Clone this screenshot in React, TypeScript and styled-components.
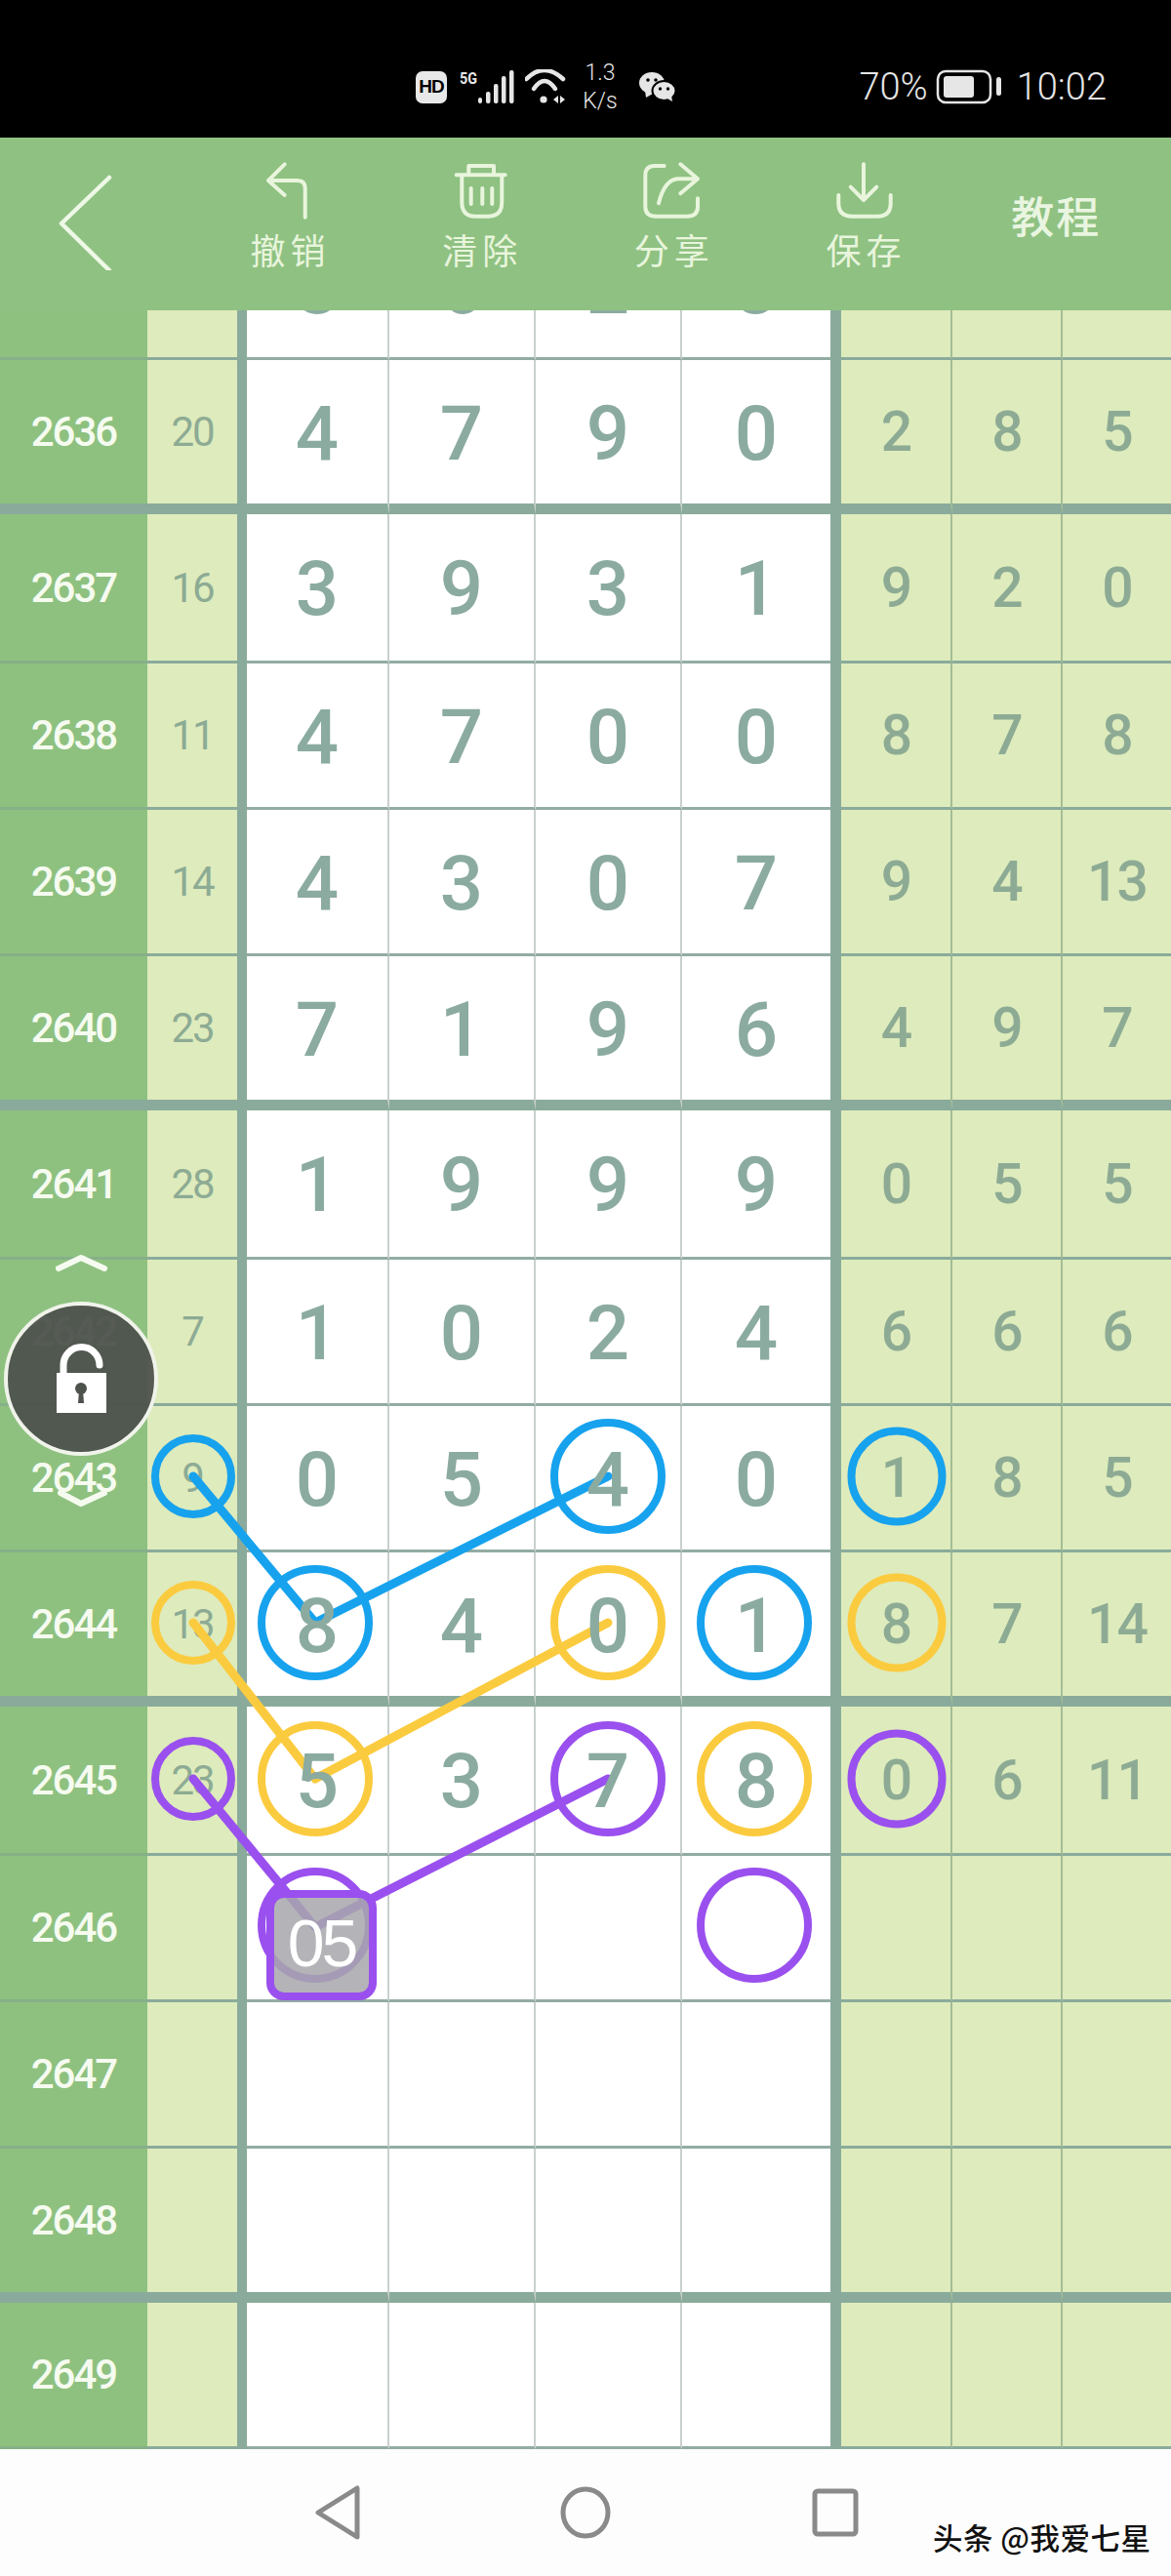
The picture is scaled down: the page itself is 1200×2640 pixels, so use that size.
import React from "react";
import styled, { createGlobalStyle } from "styled-components";

const Global = createGlobalStyle`
  html, body { margin: 0; padding: 0; background: #fff; }
  * { box-sizing: border-box; }
`;

const LINE = "#8aab9b";
const DIGIT = "#8babA0";
const SIDE_DIGIT = "#8dab94";
const NUM_FONT = `Roboto, "Noto Sans", sans-serif`;
const CJK = `"Noto Sans CJK SC", "Noto Sans", sans-serif`;

const Page = styled.div`
  position: relative;
  width: 1200px;
  height: 2640px;
  overflow: hidden;
  background: #fdfdfd;
`;

/* status bar */
const StatusBar = styled.div`
  height: 141px;
  background: #000;
  color: #e6e6e6;
  display: flex;
  align-items: center;
  padding: 37px 66px 0 426px;
  font-family: Roboto, sans-serif;
`;
const HdBadge = styled.div`
  width: 32px;
  height: 33px;
  border-radius: 7px;
  background: #e8e8e8;
  color: #000;
  font: 700 19px "Liberation Sans", sans-serif;
  letter-spacing: -1px;
  display: flex;
  align-items: center;
  justify-content: center;
`;
const StatusIcon = styled.svg<{ $ml: number }>`
  display: block;
  margin-left: ${(p) => p.$ml}px;
  flex: none;
`;
const Speed = styled.div`
  width: 40px;
  margin-left: 15px;
  font-size: 23px;
  font-weight: 300;
  line-height: 29px;
  text-align: center;
`;
const Percent = styled.div`
  margin-left: auto;
  font-size: 38px;
  font-weight: 300;
  line-height: 44px;
`;
const Clock = styled.div`
  margin-left: 15px;
  font-size: 38px;
  font-weight: 300;
  line-height: 44px;
`;

/* toolbar */
const Toolbar = styled.div`
  height: 177px;
  background: #8fc182;
  display: flex;
  color: #e8f5dc;
`;
const BackButton = styled.div`
  width: 196.67px;
  padding-top: 36px;
`;
const Action = styled.div`
  width: 196.67px;
  padding-top: 24px;
  display: flex;
  flex-direction: column;
  align-items: center;
`;
const ActionLabel = styled.div`
  margin-top: 7px;
  font: 400 36px/46px ${CJK};
  letter-spacing: 5px;
  padding-left: 5px;
`;
const Tutorial = styled.div`
  margin: 52px 0 0 53px;
  font: 500 44px/54px ${CJK};
  letter-spacing: 2px;
  color: #e9f5e0;
`;

/* table */
const Viewport = styled.div`
  height: 2192px;
  overflow: hidden;
`;
const Track = styled.div`
  margin-top: -99px;
`;
const Row = styled.div<{ $h: number }>`
  display: grid;
  grid-template-columns: 151px 92px 10px 146px 150px 150px 152px 11px 114px 113px 111px;
  height: ${(p) => p.$h}px;
`;
const Cell = styled.div<{ $line: number }>`
  display: flex;
  align-items: center;
  justify-content: center;
  border-bottom: ${(p) => p.$line}px solid ${LINE};
`;
const LabelCell = styled(Cell)`
  background: #8ec180;
  color: #f6fbf0;
  font: 500 42px ${NUM_FONT};
  letter-spacing: -2px;
  border-bottom-color: ${(p) => (p.$line > 5 ? LINE : "#86b088")};
`;
const SumCell = styled(Cell)`
  background: #deebbc;
  color: ${SIDE_DIGIT};
  font: 400 42px ${NUM_FONT};
  letter-spacing: -2px;
`;
const Bar = styled.div`
  background: ${LINE};
`;
const MainCell = styled(Cell)<{ $last?: boolean }>`
  background: #fff;
  border-right: ${(p) => (p.$last ? 0 : 2)}px solid #c9d0cd;
  border-bottom-color: ${(p) => (p.$line > 5 ? LINE : "#93aca3")};
  padding-top: 3px;
  font: 500 78px ${NUM_FONT};
  color: ${DIGIT};
`;
const BigDigit = styled.span`
  position: relative;
  z-index: 2;
`;
const SideCell = styled(Cell)<{ $last?: boolean }>`
  background: #deebbc;
  border-right: ${(p) => (p.$last ? 0 : 2)}px solid #a3bd97;
  font: 500 57px ${NUM_FONT};
  letter-spacing: -2px;
  color: ${SIDE_DIGIT};
`;

/* overlays */
const Overlay = styled.svg`
  position: absolute;
  left: 0;
  top: 0;
  z-index: 1;
  pointer-events: none;
`;
const SelectedBox = styled.div`
  position: absolute;
  left: 273px;
  top: 1937px;
  width: 113px;
  height: 113px;
  z-index: 3;
  border: 8px solid #9a50ee;
  border-radius: 18px;
  background: rgba(168, 168, 172, 0.86);
  color: #fff;
  font: 400 68px "Liberation Sans", sans-serif;
  letter-spacing: -3px;
  display: flex;
  align-items: center;
  justify-content: center;
  padding-bottom: 6px;
`;
const LockButton = styled.div`
  position: absolute;
  left: 4px;
  top: 1334px;
  width: 158px;
  height: 158px;
  z-index: 3;
  border-radius: 50%;
  border: 4px solid #f0f3ea;
  background: rgba(78, 82, 77, 0.95);
  display: flex;
  align-items: center;
  justify-content: center;
`;

/* nav */
const NavBar = styled.div`
  height: 130px;
  background: #fdfdfd;
  display: flex;
  align-items: center;
`;
const NavIcon = styled.svg<{ $ml: number }>`
  display: block;
  flex: none;
  margin-left: ${(p) => p.$ml}px;
`;
const Watermark = styled.div`
  margin: 50px 0 0 76px;
  font: 500 30.5px/36px ${CJK};
  letter-spacing: 0.5px;
  color: #111;
  white-space: nowrap;
`;

type R = { id: number; sum?: string; main?: string[]; side?: string[]; end?: boolean; h: number; hidden?: boolean };
const rows: R[] = [
  { id: 2635, main: ["8", "6", "2", "3"], h: 150, hidden: true },
  { id: 2636, sum: "20", main: ["4", "7", "9", "0"], side: ["2", "8", "5"], end: true, h: 158 },
  { id: 2637, sum: "16", main: ["3", "9", "3", "1"], side: ["9", "2", "0"], h: 153 },
  { id: 2638, sum: "11", main: ["4", "7", "0", "0"], side: ["8", "7", "8"], h: 150 },
  { id: 2639, sum: "14", main: ["4", "3", "0", "7"], side: ["9", "4", "13"], h: 150 },
  { id: 2640, sum: "23", main: ["7", "1", "9", "6"], side: ["4", "9", "7"], end: true, h: 158 },
  { id: 2641, sum: "28", main: ["1", "9", "9", "9"], side: ["0", "5", "5"], h: 153 },
  { id: 2642, sum: "7", main: ["1", "0", "2", "4"], side: ["6", "6", "6"], h: 150 },
  { id: 2643, sum: "9", main: ["0", "5", "4", "0"], side: ["1", "8", "5"], h: 150 },
  { id: 2644, sum: "13", main: ["8", "4", "0", "1"], side: ["8", "7", "14"], end: true, h: 158 },
  { id: 2645, sum: "23", main: ["5", "3", "7", "8"], side: ["0", "6", "11"], h: 153 },
  { id: 2646, h: 150 },
  { id: 2647, h: 150 },
  { id: 2648, end: true, h: 158 },
  { id: 2649, h: 150 },
];

const BLUE = "#17a2ee";
const YELLOW = "#fbcb3f";
const PURPLE = "#9a50ee";
const SUM = 39;
const BIG = 55;
const SIDE = 46.5;
const rings: [number, number, number, string][] = [
  [198, 1513, SUM, BLUE],
  [323, 1663, BIG, BLUE],
  [623, 1513, BIG, BLUE],
  [773, 1663, BIG, BLUE],
  [919, 1513, SIDE, BLUE],
  [198, 1663, SUM, YELLOW],
  [323, 1823, BIG, YELLOW],
  [623, 1663, BIG, YELLOW],
  [773, 1823, BIG, YELLOW],
  [919, 1663, SIDE, YELLOW],
  [198, 1823, SUM, PURPLE],
  [323, 1973, BIG, PURPLE],
  [623, 1823, BIG, PURPLE],
  [773, 1973, BIG, PURPLE],
  [919, 1823, SIDE, PURPLE],
];

const ActionIcon = ({ d }: { d: string }) => (
  <svg width="70" height="60" viewBox="0 0 70 60" fill="none" stroke="#e8f5dc" strokeWidth="4" strokeLinecap="round" strokeLinejoin="round">
    <path d={d} />
  </svg>
);

const actions = [
  { label: "撤销", d: "M31.7 3.3L15 20L31.7 35M15 20H45Q52.7 20 52.7 28.3V57.7" },
  { label: "清除", d: "M10.7 14.3H60.7M23.3 14.3V5H49V14.3M16.3 14.3V42Q16.3 56.7 30 56.7H44Q57.3 56.7 57.3 42V14.3M25.7 28V44M37.3 28V44M47.3 28V44" },
  { label: "分享", d: "M27.7 5H17.7Q8.3 5 8.3 15V46.7Q8.3 56.7 19.3 56.7H51Q62 56.7 62 46.7V38.3M44.3 3.3L62 18.3L44.3 33.3M62 18.3H41Q27.7 20 22 43.3" },
  { label: "保存", d: "M35 3.3V40M21.7 26.7L35 40L48.3 26.7M9.3 35V43.3Q9.3 56.7 23.3 56.7H49.3Q62.7 56.7 62.7 43.3V35" },
];

export default function App() {
  return (
    <Page>
      <Global />
      <StatusBar>
        <HdBadge>HD</HdBadge>
        <StatusIcon $ml={13} width="56" height="36" viewBox="0 0 56 36">
          <text x="0" y="15" fontFamily="Roboto, sans-serif" fontWeight="700" fontSize="17" fill="#e6e6e6" textLength="18" lengthAdjust="spacingAndGlyphs">5G</text>
          <g fill="#e6e6e6">
            <rect x="19" y="29" width="4" height="6" rx="2" />
            <rect x="27" y="23" width="4.5" height="12" rx="2" />
            <rect x="35" y="15" width="4.5" height="20" rx="2" />
            <rect x="43" y="7" width="4.5" height="28" rx="2" />
            <rect x="51" y="1" width="4.5" height="34" rx="2" />
          </g>
        </StatusIcon>
        <StatusIcon $ml={11} width="42" height="36" viewBox="0 0 42 36" fill="none">
          <path d="M1.5 10Q19.5 -8 39 10" stroke="#e6e6e6" strokeWidth="4.5" strokeLinecap="round" />
          <path d="M9 20Q20 4 31 20" stroke="#e6e6e6" strokeWidth="4.5" strokeLinecap="round" />
          <circle cx="19" cy="31" r="3.6" fill="#e6e6e6" />
          <path d="M29 31l5 -4v8zM36 27l5 4l-5 4z" fill="#e6e6e6" />
        </StatusIcon>
        <Speed>1.3<br />K/s</Speed>
        <StatusIcon $ml={20} width="38" height="32" viewBox="0 0 38 32">
          <ellipse cx="13" cy="12" rx="13" ry="11" fill="#e6e6e6" />
          <path d="M6 20l1 7l7 -4z" fill="#e6e6e6" />
          <ellipse cx="25.5" cy="20" rx="12" ry="10" fill="#e6e6e6" stroke="#000" strokeWidth="2" />
          <path d="M29 28l5 3l-1 -6z" fill="#e6e6e6" />
          <circle cx="9" cy="9" r="1.8" fill="#000" />
          <circle cx="17" cy="9" r="1.8" fill="#000" />
          <circle cx="21.5" cy="18" r="1.7" fill="#000" />
          <circle cx="29.5" cy="18" r="1.7" fill="#000" />
        </StatusIcon>
        <Percent>70%</Percent>
        <StatusIcon $ml={8} width="68" height="36" viewBox="0 0 68 36">
          <rect x="2" y="2" width="54" height="32" rx="8" fill="none" stroke="#e6e6e6" strokeWidth="2.5" />
          <rect x="8" y="7" width="31" height="22" rx="3" fill="#e6e6e6" />
          <rect x="62" y="8" width="5" height="19" rx="2.5" fill="#e6e6e6" />
        </StatusIcon>
        <Clock>10:02</Clock>
      </StatusBar>

      <Toolbar>
        <BackButton>
          <svg width="120" height="100" viewBox="0 0 120 100" fill="none" stroke="#eef8e6" strokeWidth="4.5" strokeLinecap="round" strokeLinejoin="round">
            <path d="M112 5L63 52L112 100" />
          </svg>
        </BackButton>
        {actions.map((a) => (
          <Action key={a.label}>
            <ActionIcon d={a.d} />
            <ActionLabel>{a.label}</ActionLabel>
          </Action>
        ))}
        <Tutorial>教程</Tutorial>
      </Toolbar>

      <Viewport>
        <Track>
          {rows.map((r) => {
            const line = r.end ? 11 : 3;
            const main = r.main ?? ["", "", "", ""];
            const side = r.side ?? ["", "", ""];
            return (
              <Row key={r.id} $h={r.h}>
                <LabelCell $line={line}>{r.hidden ? "" : r.id}</LabelCell>
                <SumCell $line={line}>{r.sum}</SumCell>
                <Bar />
                {main.map((d, i) => (
                  <MainCell key={i} $line={line} $last={i === 3}>
                    <BigDigit>{d}</BigDigit>
                  </MainCell>
                ))}
                <Bar />
                {side.map((d, i) => (
                  <SideCell key={i} $line={line} $last={i === 2}>{d}</SideCell>
                ))}
              </Row>
            );
          })}
        </Track>
      </Viewport>

      <NavBar>
        <NavIcon $ml={322} width="48" height="56" viewBox="0 0 48 56" fill="none" stroke="#8a8a8a" strokeWidth="5" strokeLinejoin="round">
          <path d="M44 3V53L4 28Z" />
        </NavIcon>
        <NavIcon $ml={204} width="52" height="54" viewBox="0 0 52 54" fill="none" stroke="#8a8a8a" strokeWidth="5">
          <ellipse cx="26" cy="27" rx="23" ry="24" />
        </NavIcon>
        <NavIcon $ml={206} width="48" height="50" viewBox="0 0 48 50" fill="none" stroke="#8a8a8a" strokeWidth="5">
          <rect x="3" y="3" width="42" height="44" rx="3" />
        </NavIcon>
        <Watermark>头条 @我爱七星</Watermark>
      </NavBar>

      <Overlay width="1200" height="2640" viewBox="0 0 1200 2640" fill="none">
        <polyline points="198,1513 323,1663 623,1513" stroke={BLUE} strokeWidth="9" strokeLinecap="round" strokeLinejoin="round" />
        <polyline points="198,1663 323,1823 623,1663" stroke={YELLOW} strokeWidth="9" strokeLinecap="round" strokeLinejoin="round" />
        <polyline points="198,1823 323,1975 623,1823" stroke={PURPLE} strokeWidth="9" strokeLinecap="round" strokeLinejoin="round" />
        {rings.map(([cx, cy, r, c], i) => (
          <circle key={i} cx={cx} cy={cy} r={r} stroke={c} strokeWidth="8" />
        ))}
        <polyline points="60,1300 83,1289 107,1300" stroke="#f6fbf0" strokeWidth="6" strokeLinecap="round" strokeLinejoin="round" />
        <polyline points="62,1530 83,1541 107,1530" stroke="#f6fbf0" strokeWidth="6" strokeLinecap="round" strokeLinejoin="round" />
      </Overlay>

      <LockButton>
        <svg width="66" height="80" viewBox="0 0 66 80">
          <path d="M15 36V26A18.5 18.5 0 0 1 52 26" fill="none" stroke="#fff" strokeWidth="7" strokeLinecap="round" />
          <rect x="8" y="34" width="51" height="41" fill="#fff" />
          <circle cx="33" cy="50" r="6" fill="#4e524d" />
          <path d="M31 52h4l1 13h-6z" fill="#4e524d" />
        </svg>
      </LockButton>
      <SelectedBox>05</SelectedBox>
    </Page>
  );
}
